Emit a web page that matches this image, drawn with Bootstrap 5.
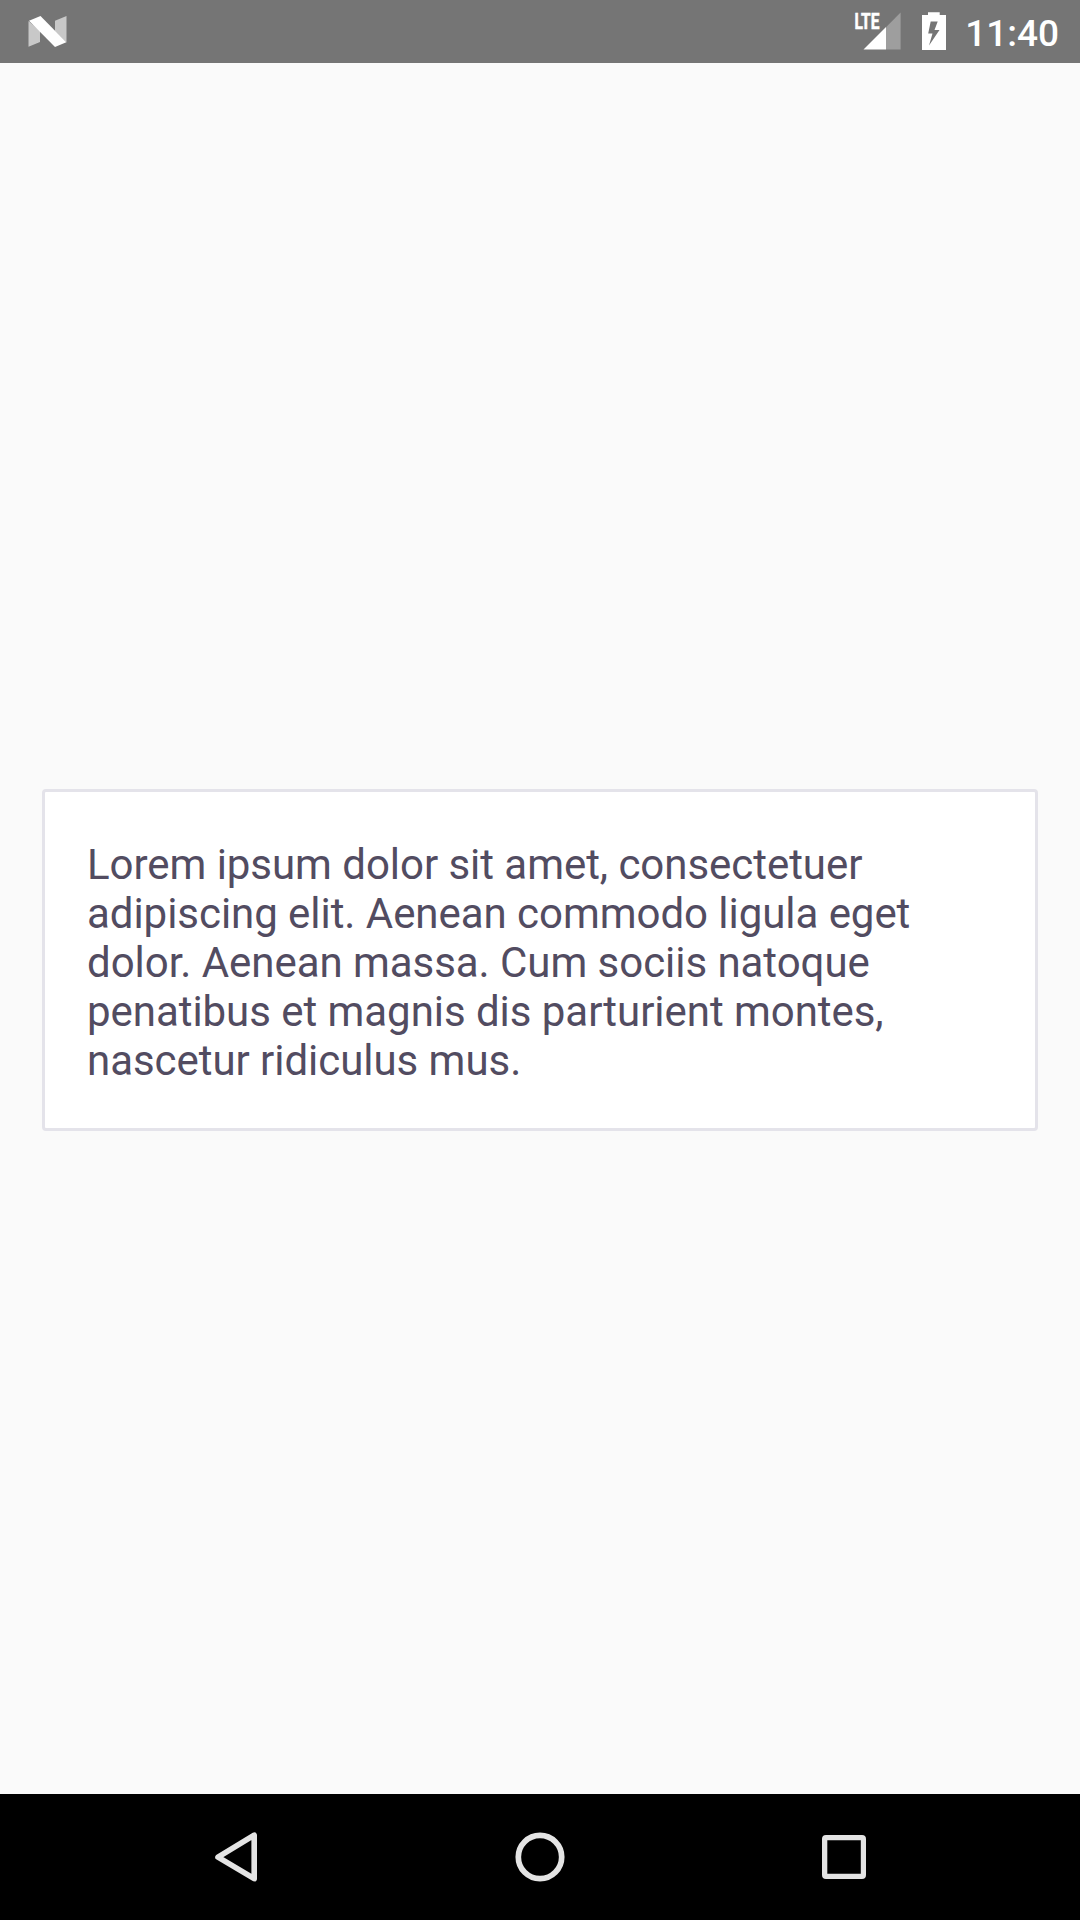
<!DOCTYPE html>
<html lang="en">
<head>
<meta charset="utf-8">
<meta name="viewport" content="width=device-width, initial-scale=1">
<title>Lorem ipsum</title>
<link href="https://cdn.jsdelivr.net/npm/bootstrap@5.3.0/dist/css/bootstrap.min.css" rel="stylesheet">
<style>
  body { background: #fafafa; font-family: Roboto, "Liberation Sans", sans-serif; }
  .status-bar { height: 63px; background: #757575; padding: 0 21px 0 27px; }
  .status-bar svg, .nav-keys svg { display: block; flex: none; }
  .clock { width: 109px; font-size: 37px; font-weight: 500; line-height: 63px; padding-top: 2px; }
  .screen { padding: 63px 42px 0; }
  .text-box { border: 3px solid #e4e3ea; border-radius: 4px; padding: 48px 42px 43px; color: #524c61; font-size: 42px; line-height: 49px; letter-spacing: -0.045px; }
  .nav-keys { height: 126px; padding: 0 206px; background: #000; }
</style>
</head>
<body class="vh-100 d-flex flex-column overflow-hidden">
<header class="status-bar d-flex align-items-start text-white">
  <svg class="me-auto" width="42" height="63" viewBox="27 0 42 63">
    <path fill="#c8c8c8" d="M28.5 21 40 31v11L28.5 46.8zM55 20.7 66.5 16v26.500L55 31z"/>
    <path fill="#fff" d="M29 20.700 40.500 16 66.300 42.300 55 47z"/>
  </svg>
  <svg width="96" height="63" viewBox="854 0 96 63" fill="#fff">
    <text x="854.4" y="29" font-size="22" font-weight="700" textLength="25" lengthAdjust="spacingAndGlyphs" stroke="#fff" stroke-width=".6">LTE</text>
    <path fill="#9e9e9e" d="M886 27.300 900.600 12.600V49.500H886z"/>
    <path d="M863.500 49.500 886 27v22.500z"/>
    <path fill-rule="evenodd" d="M928 12.300h11.700V15H946v35h-24V15h6zM930.700 21.500 928.200 33.500h4.300L929 45.500 939.500 30h-5L937.700 21.500z"/>
  </svg>
  <span class="clock text-end">11:40</span>
</header>
<main class="screen flex-grow-1 d-flex flex-column justify-content-center">
  <div class="text-box bg-white">Lorem ipsum dolor sit amet, consectetuer adipiscing elit. Aenean commodo ligula eget dolor. Aenean massa. Cum sociis natoque penatibus et magnis dis parturient montes, nascetur ridiculus mus.</div>
</main>
<footer class="nav-keys d-flex justify-content-between">
  <svg width="60" height="126" viewBox="206 1794 60 126" fill="none" stroke="#e4e4e4" stroke-width="5.6" stroke-linejoin="round"><path d="M218 1857.200 254.200 1835.200V1878.700z"/></svg>
  <svg width="60" height="126" viewBox="510 1794 60 126" fill="none" stroke="#e4e4e4" stroke-width="5.7"><circle cx="540" cy="1857" r="21.700"/></svg>
  <svg width="60" height="126" viewBox="814 1794 60 126"><path fill="#e4e4e4" fill-rule="evenodd" d="M826 1835h36q4 0 4 4v36q0 4-4 4h-36q-4 0-4-4v-36q0-4 4-4zM827.300 1840.300v33.500h33.500v-33.500z"/></svg>
</footer>
<script src="https://cdn.jsdelivr.net/npm/bootstrap@5.3.0/dist/js/bootstrap.bundle.min.js"></script>
</body>
</html>
